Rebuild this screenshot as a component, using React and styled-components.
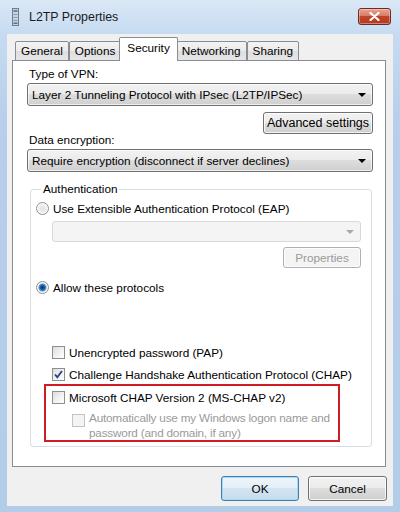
import React from 'react';
import styled, { createGlobalStyle } from 'styled-components';

const GlobalStyle = createGlobalStyle`
  html, body {
    margin: 0;
    padding: 0;
    background: #b9d1ea;
  }
  body {
    font-family: "Liberation Sans", Arial, sans-serif;
    font-size: 11.75px;
    color: #000;
  }
`;

const Window = styled.div`
  width: 400px;
  height: 512px;
  box-sizing: border-box;
  display: flex;
  flex-direction: column;
  padding: 0 7px 6px;
  background: linear-gradient(to bottom, #dbe8f6 0, #c6dbf1 34px, #b7cfea 120px, #b3cce8 100%);
`;

const TitleBar = styled.div`
  height: 34px;
  display: flex;
  align-items: center;
`;

const TitleIcon = styled.svg`
  width: 7px;
  height: 18px;
  margin-left: 5px;
  flex-shrink: 0;
`;

const Title = styled.div`
  margin-left: 10px;
  font-size: 12.4px;
  color: #1b1b1b;
  flex: 1;
`;

const CloseButton = styled.div`
  width: 33px;
  height: 17px;
  margin-right: 2px;
  margin-top: -2px;
  box-sizing: border-box;
  border: 1px solid #6e2a20;
  border-radius: 3px;
  background: linear-gradient(to bottom, #e8a493 0, #d97c66 45%, #c2432a 50%, #b13a24 100%);
  box-shadow: inset 0 0 0 1px rgba(255, 220, 210, 0.45);
  display: flex;
  align-items: center;
  justify-content: center;
`;

const Client = styled.div`
  flex: 1;
  display: flex;
  flex-direction: column;
  background: #f0f0f0;
  padding: 4px 6px 0 5px;
`;

const TabStrip = styled.div`
  height: 23px;
  display: flex;
  align-items: flex-end;
  padding-left: 3px;
  margin-bottom: -1px;
  position: relative;
  z-index: 1;
`;

const Tab = styled.div`
  box-sizing: border-box;
  height: ${p => (p.$active ? '24px' : '20px')};
  padding: ${p => (p.$active ? '3px 7px 0' : '2px 5px 0')};
  margin: ${p => (p.$active ? '0 -2px' : '0')};
  border: 1px solid #898c95;
  border-bottom: ${p => (p.$active ? 'none' : '1px solid #898c95')};
  border-radius: 2px 2px 0 0;
  background: ${p => (p.$active ? '#fff' : 'linear-gradient(to bottom, #f3f3f3 0, #ebebeb 50%, #dedede 50%, #e6e6e6 100%)')};
  position: relative;
  z-index: ${p => (p.$active ? 2 : 0)};
  white-space: nowrap;
`;

const Panel = styled.div`
  flex: 1;
  display: flex;
  flex-direction: column;
  background: #fff;
  border: 1px solid #898c95;
  margin-right: 1px;
  padding: 6px 12px 0 15px;
`;

const Label = styled.div`
  line-height: 14px;
  margin: ${p => p.$top || 0}px 0 0 1px;
`;

const Combo = styled.div`
  box-sizing: border-box;
  height: ${p => (p.$disabled ? '21px' : '23px')};
  margin-top: ${p => p.$top || 0}px;
  margin-left: ${p => p.$left || 0}px;
  display: flex;
  align-items: center;
  padding: 0 6px 0 4px;
  border: 1px solid ${p => (p.$disabled ? '#d9d9d9' : '#707070')};
  border-radius: 3px;
  background: ${p => (p.$disabled
    ? '#f4f4f4'
    : 'linear-gradient(to bottom, #f2f2f2 0, #ebebeb 50%, #dddddd 50%, #cfcfcf 100%)')};
  box-shadow: ${p => (p.$disabled ? 'none' : 'inset 0 0 0 1px rgba(255,255,255,0.7)')};
`;

const ComboText = styled.span`
  flex: 1;
  white-space: nowrap;
`;

const Arrow = styled.span`
  width: 0;
  height: 0;
  border-left: 4px solid transparent;
  border-right: 4px solid transparent;
  border-top: 4px solid ${p => (p.$disabled ? '#a8a8a8' : '#000')};
  margin-top: 1px;
`;

const Button = styled.div`
  box-sizing: border-box;
  width: ${p => p.$w}px;
  height: ${p => p.$h || 25}px;
  margin-top: ${p => p.$top || 0}px;
  align-self: ${p => p.$align || 'auto'};
  display: flex;
  align-items: center;
  justify-content: center;
  border: 1px solid ${p => (p.$disabled ? '#adb2b5' : p.$default ? '#3c7fb1' : '#707070')};
  border-radius: 3px;
  color: ${p => (p.$disabled ? '#9a9a9a' : '#000')};
  font-size: ${p => p.$size || 11.75}px;
  background: ${p => (p.$disabled
    ? '#f4f4f4'
    : p.$default
      ? 'linear-gradient(to bottom, #eef6fc 0, #e3eef7 50%, #d3e4f1 50%, #c8dcec 100%)'
      : 'linear-gradient(to bottom, #f2f2f2 0, #ebebeb 50%, #dddddd 50%, #cfcfcf 100%)')};
  box-shadow: ${p => (p.$default
    ? 'inset 0 0 0 1px #a8d8f3'
    : 'inset 0 0 0 1px rgba(255,255,255,0.75)')};
  white-space: nowrap;
`;

const Group = styled.fieldset`
  margin: 10px 1px 0 2px;
  padding: 0 10px 4px 5px;
  border: 1px solid #d5dfe5;
  border-radius: 3px;
  display: flex;
  flex-direction: column;
`;

const Legend = styled.legend`
  padding: 0 2px;
  margin-left: 5px;
  line-height: 14px;
`;

const Row = styled.div`
  display: flex;
  align-items: ${p => (p.$wrap ? 'flex-start' : 'center')};
  gap: 4px;
  height: ${p => (p.$wrap ? 'auto' : '13px')};
  margin-top: ${p => p.$top || 0}px;
  margin-left: ${p => p.$left || 0}px;
  color: ${p => (p.$disabled ? '#9a9a9a' : '#000')};
  white-space: nowrap;
`;

const Radio = styled.span`
  box-sizing: border-box;
  width: 13px;
  height: 13px;
  flex-shrink: 0;
  border-radius: 50%;
  border: 1px solid #8e8f8f;
  background: ${p => (p.$checked
    ? 'radial-gradient(circle, #0d2c52 0, #1d5a97 2px, #5596d4 3.5px, #dde8f3 4.5px, #f4f4f4 6px)'
    : 'radial-gradient(circle, #e2e2e2 0, #ececec 3px, #f7f7f7 6px)')};
  box-shadow: inset 0 0 0 1px rgba(255,255,255,0.8);
`;

const Check = styled.span`
  box-sizing: border-box;
  width: 13px;
  height: 13px;
  flex-shrink: 0;
  margin-top: ${p => p.$top || 0}px;
  border: 1px solid ${p => (p.$disabled ? '#c4c4c4' : '#8e8f8f')};
  background: ${p => (p.$disabled
    ? '#f4f4f4'
    : 'linear-gradient(135deg, #dcdcdc 0, #f4f4f4 60%, #fff 100%)')};
  display: flex;
  align-items: center;
  justify-content: center;
`;

const Highlight = styled.div`
  margin: 3px 0 0 8px;
  width: 296px;
  box-sizing: border-box;
  border: 2px solid #cf1c24;
  padding: 5px 0 0 6px;
  display: flex;
  flex-direction: column;
`;

const WrapText = styled.div`
  line-height: 15px;
  margin-top: -3px;
  letter-spacing: -0.2px;
`;

const Footer = styled.div`
  height: 39px;
  display: flex;
  justify-content: flex-end;
  gap: 9px;
  padding-top: 9px;
  box-sizing: border-box;
`;

function Checkmark() {
  return (
    <svg width="11" height="11" viewBox="0 0 11 11">
      <path d="M2 5.5 L4.3 8.2 L9 2" fill="none" stroke="#24457d" strokeWidth="1.8" />
    </svg>
  );
}

export default function App() {
  return (
    <>
      <GlobalStyle />
      <Window>
        <TitleBar>
          <TitleIcon viewBox="0 0 7 18">
            <rect x="0.5" y="0.5" width="6" height="17" fill="#c9d3dd" stroke="#6f7d8c" />
            <rect x="1.5" y="2" width="4" height="2" fill="#5f87b5" />
            <rect x="1.5" y="6" width="4" height="1" fill="#8a99aa" />
            <rect x="1.5" y="9" width="4" height="1" fill="#8a99aa" />
            <rect x="1.5" y="12" width="4" height="1" fill="#8a99aa" />
            <rect x="1.5" y="14.5" width="4" height="1.5" fill="#4f6f95" />
          </TitleIcon>
          <Title>L2TP Properties</Title>
          <CloseButton>
            <svg width="11" height="9" viewBox="0 0 11 9">
              <path d="M1.5 1 L9.5 8 M9.5 1 L1.5 8" stroke="#fff" strokeWidth="2.2" strokeLinecap="round" />
            </svg>
          </CloseButton>
        </TitleBar>
        <Client>
          <TabStrip>
            <Tab>General</Tab>
            <Tab>Options</Tab>
            <Tab $active>Security</Tab>
            <Tab>Networking</Tab>
            <Tab>Sharing</Tab>
          </TabStrip>
          <Panel>
            <Label>Type of VPN:</Label>
            <Combo $top={2} $left={-1}>
              <ComboText>Layer 2 Tunneling Protocol with IPsec (L2TP/IPSec)</ComboText>
              <Arrow />
            </Combo>
            <Button $w={110} $h={22} $top={6} $size={12.5} $align="flex-end">Advanced settings</Button>
            <Label $top={-1}>Data encryption:</Label>
            <Combo $top={2} $left={-1}>
              <ComboText>Require encryption (disconnect if server declines)</ComboText>
              <Arrow />
            </Combo>
            <Group>
              <Legend>Authentication</Legend>
              <Row $top={6}>
                <Radio />
                Use Extensible Authentication Protocol (EAP)
              </Row>
              <Combo $disabled $top={6} $left={16}>
                <ComboText />
                <Arrow $disabled />
              </Combo>
              <Button $disabled $w={78} $h={21} $top={5} $align="flex-end">Properties</Button>
              <Row $top={13}>
                <Radio $checked />
                Allow these protocols
              </Row>
              <Row $top={52} $left={16}>
                <Check />
                Unencrypted password (PAP)
              </Row>
              <Row $top={9} $left={16}>
                <Check><Checkmark /></Check>
                Challenge Handshake Authentication Protocol (CHAP)
              </Row>
              <Highlight>
                <Row>
                  <Check />
                  Microsoft CHAP Version 2 (MS-CHAP v2)
                </Row>
                <Row $wrap $disabled $top={9} $left={20}>
                  <Check $disabled $top={1} />
                  <WrapText>
                    Automatically use my Windows logon name and<br />
                    password (and domain, if any)
                  </WrapText>
                </Row>
              </Highlight>
            </Group>
          </Panel>
          <Footer>
            <Button $w={78} $default>OK</Button>
            <Button $w={79}>Cancel</Button>
          </Footer>
        </Client>
      </Window>
    </>
  );
}
